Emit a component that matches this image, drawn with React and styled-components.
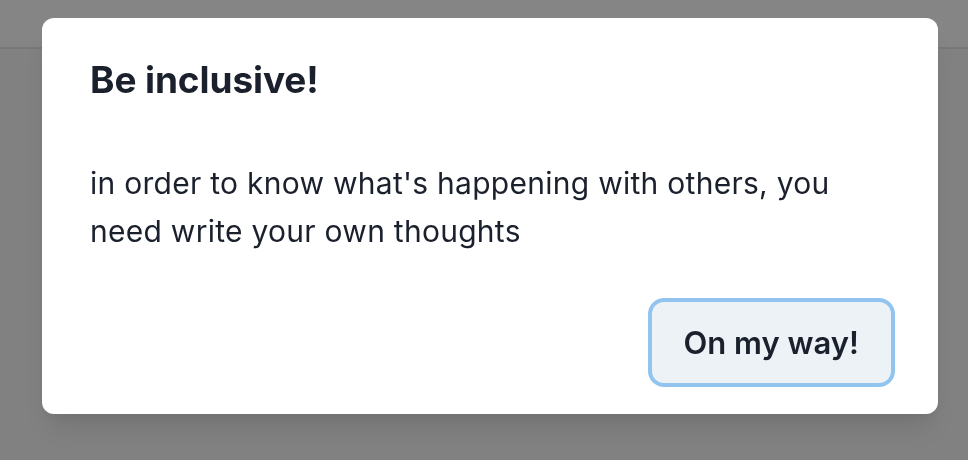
import React from "react";
import styled, { createGlobalStyle } from "styled-components";

const GlobalStyle = createGlobalStyle`
  html, body {
    margin: 0;
    padding: 0;
  }
  body {
    font-family: Inter, "Noto Sans", "Liberation Sans", sans-serif;
    background: #f7f7f7;
    color: #1a202c;
  }
  * {
    box-sizing: border-box;
  }
`;

const Page = styled.div`
  height: 460px;
  overflow: hidden;
`;

const TopBar = styled.header`
  height: 49px;
  background: #ffffff;
  border-bottom: 2px solid #e6e6e6;
`;

const Overlay = styled.div`
  position: fixed;
  inset: 0;
  background: rgba(0, 0, 0, 0.48);
  display: flex;
  justify-content: center;
  align-items: flex-start;
  padding: 18px 0 0 12px;
`;

const Dialog = styled.section`
  width: 896px;
  background: #ffffff;
  border-radius: 12px;
  box-shadow: 0 20px 30px -6px rgba(0, 0, 0, 0.1),
    0 8px 12px -4px rgba(0, 0, 0, 0.05);
  display: flex;
  flex-direction: column;
`;

const Header = styled.h2`
  margin: 0;
  padding: 32px 48px;
  font-size: 37px;
  line-height: 60px;
  font-weight: 700;
  letter-spacing: -0.1px;
  color: #1a202c;
`;

const Body = styled.div`
  padding: 17px 48px 15px;
  font-size: 30px;
  line-height: 48px;
  letter-spacing: 0.27px;
  color: #1a202c;
`;

const Footer = styled.footer`
  display: flex;
  justify-content: flex-end;
  padding: 32px 47px 31px 48px;
`;

const Button = styled.button`
  height: 81px;
  padding: 0 32px;
  border: none;
  border-radius: 12px;
  background: #edf2f7;
  color: #1a202c;
  font-family: inherit;
  font-size: 31px;
  font-weight: 600;
  box-shadow: 0 0 0 4px rgba(66, 153, 225, 0.58);
  cursor: pointer;
`;

export default function App() {
  return (
    <>
      <GlobalStyle />
      <Page>
        <TopBar />
        <Overlay>
          <Dialog role="dialog">
            <Header>Be inclusive!</Header>
            <Body>
              in order to know what's happening with others, you need write
              your own thoughts
            </Body>
            <Footer>
              <Button>On my way!</Button>
            </Footer>
          </Dialog>
        </Overlay>
      </Page>
    </>
  );
}
